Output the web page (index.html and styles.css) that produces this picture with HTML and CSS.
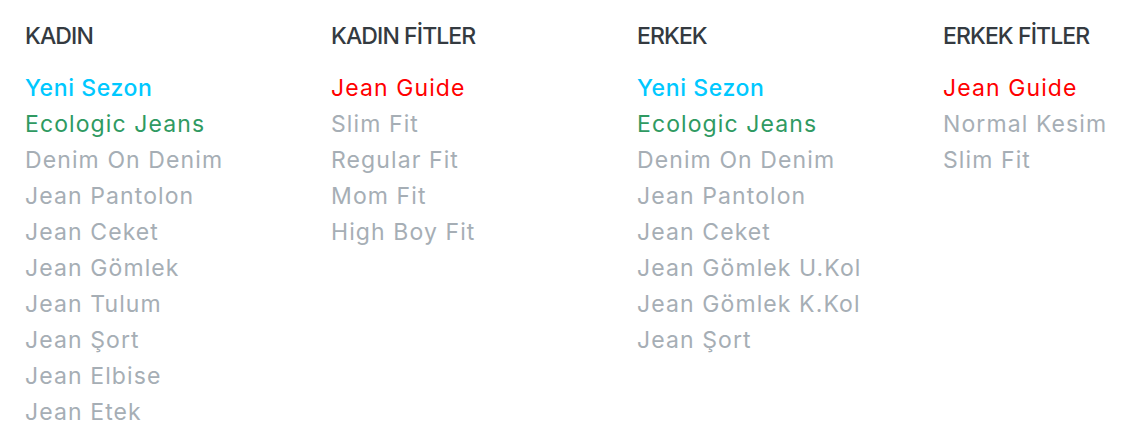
FILE: index.html
```html
<!DOCTYPE html>
<html lang="tr">
<head>
<meta charset="utf-8">
<link rel="stylesheet" href="styles.css">
</head>
<body>
<div class="menu">
  <div class="col">
    <h3 class="title">KADIN</h3>
    <ul class="links">
      <li class="new">Yeni Sezon</li>
      <li class="eco">Ecologic Jeans</li>
      <li>Denim On Denim</li>
      <li>Jean Pantolon</li>
      <li>Jean Ceket</li>
      <li>Jean Gömlek</li>
      <li>Jean Tulum</li>
      <li>Jean Şort</li>
      <li>Jean Elbise</li>
      <li>Jean Etek</li>
    </ul>
  </div>
  <div class="col">
    <h3 class="title">KADIN FİTLER</h3>
    <ul class="links">
      <li class="guide">Jean Guide</li>
      <li>Slim Fit</li>
      <li>Regular Fit</li>
      <li>Mom Fit</li>
      <li>High Boy Fit</li>
    </ul>
  </div>
  <div class="col">
    <h3 class="title">ERKEK</h3>
    <ul class="links">
      <li class="new">Yeni Sezon</li>
      <li class="eco">Ecologic Jeans</li>
      <li>Denim On Denim</li>
      <li>Jean Pantolon</li>
      <li>Jean Ceket</li>
      <li>Jean Gömlek U.Kol</li>
      <li>Jean Gömlek K.Kol</li>
      <li>Jean Şort</li>
    </ul>
  </div>
  <div class="col">
    <h3 class="title">ERKEK FİTLER</h3>
    <ul class="links">
      <li class="guide">Jean Guide</li>
      <li>Normal Kesim</li>
      <li>Slim Fit</li>
    </ul>
  </div>
</div>
</body>
</html>
```
FILE: styles.css
```css
html, body {
  margin: 0;
  padding: 0;
  background: #ffffff;
}
body {
  font-family: Inter, "Noto Sans", sans-serif;
}
.menu {
  display: grid;
  grid-template-columns: 306px 306px 306px 1fr;
  padding: 18px 0 0 25px;
}
.col {
  min-width: 0;
}
.title {
  margin: 0 0 16px 0;
  font-size: 23px;
  font-weight: 500;
  line-height: 36px;
  color: #343a40;
  letter-spacing: -0.9px;
  white-space: nowrap;
}
.links {
  list-style: none;
  margin: 0;
  padding: 0;
}
.links li {
  font-size: 23px;
  line-height: 36px;
  color: #a6aeb5;
  font-weight: 400;
  letter-spacing: 1.1px;
  white-space: nowrap;
}
.links li.new {
  color: #00c8ff;
  font-weight: 500;
  letter-spacing: 0.6px;
}
.links li.eco {
  color: #2f9a62;
}
.links li.guide {
  color: #ff0000;
}
```
